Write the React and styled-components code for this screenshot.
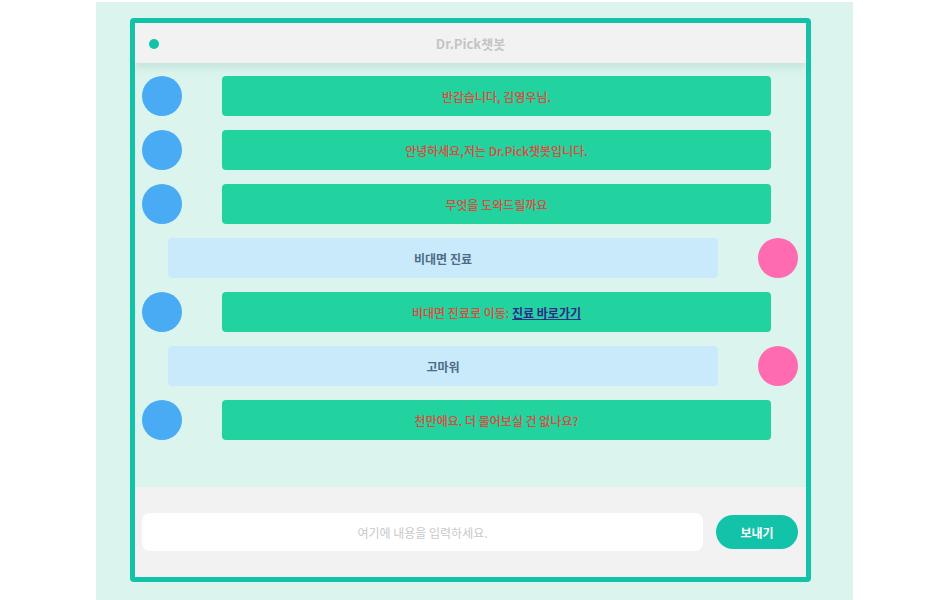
import React from "react";
import styled, { createGlobalStyle } from "styled-components";

const GlobalStyle = createGlobalStyle`
  html, body {
    margin: 0;
    padding: 0;
    background: #ffffff;
    font-family: "Noto Sans CJK KR", "Noto Sans", sans-serif;
  }
`;

// 채팅 내용
const messages = [
  { from: "bot", text: "반갑습니다, 김영우님." },
  { from: "bot", text: "안녕하세요,저는 Dr.Pick챗봇입니다." },
  { from: "bot", text: "무엇을 도와드릴까요" },
  { from: "user", text: "비대면 진료" },
  { from: "bot", text: "비대면 진료로 이동: ", link: "진료 바로가기" },
  { from: "user", text: "고마워" },
  { from: "bot", text: "천만에요. 더 물어보실 건 없나요?" },
];

const App = () => {
  return (
    <>
      <GlobalStyle />
      <Page>
        <Frame>
          <Header>
            <Dot />
            <Title>Dr.Pick챗봇</Title>
          </Header>
          <ChatArea>
            {messages.map((msg, index) =>
              msg.from === "bot" ? (
                <BotRow key={index}>
                  <Avatar color="#4aabf5" />
                  <Bubble bot>
                    {msg.text}
                    {msg.link && <Link href="#">{msg.link}</Link>}
                  </Bubble>
                </BotRow>
              ) : (
                <UserRow key={index}>
                  <Bubble>{msg.text}</Bubble>
                  <Avatar color="#ff6bb1" />
                </UserRow>
              )
            )}
          </ChatArea>
          <Footer>
            <Input placeholder="여기에 내용을 입력하세요." />
            <SendButton>보내기</SendButton>
          </Footer>
        </Frame>
      </Page>
    </>
  );
};

const Page = styled.div`
  width: 757px;
  height: 598px;
  margin: 2px 0 0 96px;
  background-color: #dbf5ee;
  padding: 16px 0 0 34px;
  box-sizing: border-box;
`;

const Frame = styled.div`
  width: 681px;
  height: 564px;
  border: 5px solid #12c2a9;
  border-radius: 4px;
  box-sizing: border-box;
  display: flex;
  flex-direction: column;
  background-color: #dbf5ee;
`;

const Header = styled.div`
  height: 40px;
  flex-shrink: 0;
  background-color: #f2f2f2;
  position: relative;
  display: flex;
  align-items: center;
  justify-content: center;
  box-shadow: 0 4px 8px rgba(120, 170, 155, 0.25);
  z-index: 1;
`;

const Dot = styled.span`
  position: absolute;
  left: 14px;
  top: 16px;
  width: 10px;
  height: 10px;
  border-radius: 50%;
  background-color: #12c2a9;
`;

const Title = styled.div`
  font-size: 13px;
  font-weight: bold;
  color: #c4c4c4;
`;

const ChatArea = styled.div`
  flex: 1;
  display: flex;
  flex-direction: column;
  gap: 14px;
  padding-top: 13px;
`;

const BotRow = styled.div`
  display: flex;
  align-items: center;
  gap: 40px;
  padding-left: 7px;
`;

const UserRow = styled.div`
  display: flex;
  align-items: center;
  gap: 40px;
  padding-left: 33px;
`;

const Avatar = styled.div`
  width: 40px;
  height: 40px;
  border-radius: 50%;
  flex-shrink: 0;
  background-color: ${(props) => props.color};
`;

const Bubble = styled.div`
  width: ${(props) => (props.bot ? "549px" : "550px")};
  height: 40px;
  border-radius: 4px;
  display: flex;
  align-items: center;
  justify-content: center;
  font-size: 12px;
  font-weight: ${(props) => (props.bot ? 500 : 700)};
  background-color: ${(props) => (props.bot ? "#22d29f" : "#c8eafa")};
  color: ${(props) => (props.bot ? "#e2473b" : "#4e6b86")};
  white-space: pre;
`;

const Link = styled.a`
  color: #2d2a8c;
  font-weight: bold;
  text-decoration: underline;
`;

const Footer = styled.div`
  height: 90px;
  flex-shrink: 0;
  background-color: #f2f2f2;
  display: flex;
  align-items: center;
  gap: 13px;
  padding: 0 8px 0 7px;
`;

const Input = styled.input`
  width: 561px;
  height: 38px;
  border: none;
  border-radius: 8px;
  background-color: #ffffff;
  box-sizing: border-box;
  text-align: center;
  font-family: "Noto Sans CJK KR", sans-serif;
  font-size: 12px;
  outline: none;

  &::placeholder {
    color: #c8c8c8;
  }
`;

const SendButton = styled.button`
  width: 82px;
  height: 34px;
  border: none;
  border-radius: 17px;
  background-color: #12c2a9;
  color: #ffffff;
  font-family: "Noto Sans CJK KR", sans-serif;
  font-size: 12px;
  font-weight: bold;
  cursor: pointer;
`;

export default App;
